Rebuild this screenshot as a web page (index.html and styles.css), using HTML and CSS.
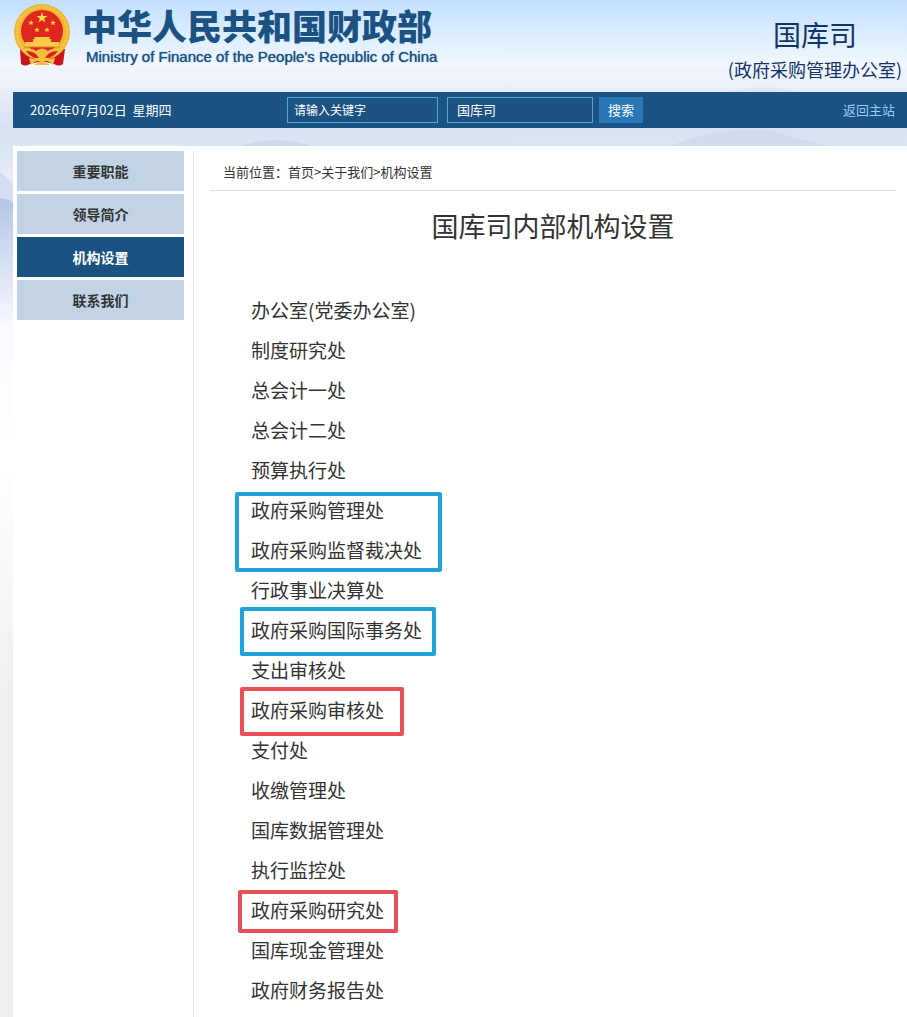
FILE: index.html
```html
<!DOCTYPE html>
<html lang="zh-CN">
<head>
    <meta charset="UTF-8">
    <meta name="viewport" content="width=device-width, initial-scale=1.0">
    <title>国库司内部机构设置</title>
    <link rel="stylesheet" href="styles.css">
</head>
<body>
    <svg class="hills" viewBox="0 0 907 330" preserveAspectRatio="none" aria-hidden="true">
        <defs>
            <linearGradient id="hillFade" x1="0" y1="0" x2="0" y2="1">
                <stop offset="0" stop-color="#b3c5e6"/>
                <stop offset="1" stop-color="#fafbff"/>
            </linearGradient>
        </defs>
        <path d="M0 198Q8 198 14 202V330H0Z" fill="url(#hillFade)"/>
        <path d="M0 172Q6 176 14 186V204Q8 198 0 198Z" fill="#d3def2"/>
        <path d="M725 92Q755 86 770 88Q785 88 800 92Z" fill="#dfe6f3"/>
        <path d="M240 146Q268 138 288 141Q302 143 312 146Z" fill="#cdd8ec"/>
        <path d="M670 146Q705 132 735 130H770Q800 140 830 146Z" fill="#d0dcee"/>
    </svg>
    <div class="page">
        <header class="header">
            <div class="brand">
                <svg class="emblem" viewBox="0 0 58 62" aria-hidden="true">
                    <path d="M7 45L8 60Q12 63 17 60L29 57L41 60Q46 63 50 60L52 45Z" fill="#c9161c"/>
                    <circle cx="29" cy="28" r="28" fill="#efb534"/>
                    <circle cx="29" cy="28" r="25" fill="none" stroke="#f5c545" stroke-width="3" stroke-dasharray="3 1"/>
                    <circle cx="29" cy="27" r="21" fill="#df261f"/>
                    <path d="M29 8L30.300 12H34.500L31.100 14.500L32.400 18.500L29 16L25.600 18.500L26.900 14.500L23.500 12H27.700Z" fill="#ffdc4a"/>
                    <g fill="#ffd447">
                        <path d="M18 16l.8 2h2l-1.600 1.300.6 2-1.800-1.200-1.800 1.200.6-2-1.600-1.300h2z"/>
                        <path d="M40 16l.8 2h2l-1.600 1.300.6 2-1.800-1.200-1.800 1.200.6-2-1.600-1.300h2z"/>
                        <path d="M24 23l.8 2h2l-1.600 1.300.6 2-1.800-1.200-1.800 1.200.6-2-1.600-1.300h2z"/>
                        <path d="M34 23l.8 2h2l-1.600 1.300.6 2-1.800-1.200-1.800 1.200.6-2-1.600-1.300h2z"/>
                    </g>
                    <path d="M21 33H37L36 35H38V38H46V43H12V38H20V35H22Z" fill="#f8c94a"/>
                    <path d="M11 43H47" stroke="#dc8b25"/>
                    <path d="M9 45Q20 44 23 47Q29 42 35 47Q38 44 49 45L42 53Q35 55 32 52H26Q23 55 16 53Z" fill="#f4c23e"/>
                    <path d="M13 47Q20 47 24 51H34Q38 47 45 47Q39 55 33 54L29 51L25 54Q19 55 13 47Z" fill="#d8221d"/>
                    <path d="M22 48Q29 43 36 48L33 53H25Z" fill="#f2bd38"/>
                    <path d="M16 54Q24 56 27 53H31Q34 56 42 54L40 61Q35 55 29 58Q23 55 18 61Z" fill="#f4c23e"/>
                    <path d="M21 61Q29 54 37 61Z" fill="#f3b735"/>
                </svg>
                <div class="brand-text">
                    <div class="brand-name">中华人民共和国财政部</div>
                    <div class="brand-en">Ministry of Finance of the People's Republic of China</div>
                </div>
            </div>
            <div class="department">
                <div class="department-name">国库司</div>
                <div class="department-note">(政府采购管理办公室)</div>
            </div>
        </header>

        <div class="toolbar">
            <div class="date">2026年07月02日&nbsp; 星期四</div>
            <form class="search">
                <input type="text" class="keyword" placeholder="请输入关键字" aria-label="请输入关键字">
                <select class="scope" aria-label="搜索范围">
                    <option>国库司</option>
                </select>
                <button type="button" class="search-btn">搜索</button>
            </form>
            <a href="#" class="back">返回主站</a>
        </div>

        <div class="main">
            <nav class="side">
                <a href="#">重要职能</a>
                <a href="#">领导简介</a>
                <a href="#" class="active">机构设置</a>
                <a href="#">联系我们</a>
            </nav>
            <div class="content">
                <div class="crumbs">当前位置：<a href="#">首页</a>&gt;<a href="#">关于我们</a>&gt;<a href="#">机构设置</a></div>
                <h1>国库司内部机构设置</h1>
                <ul class="offices">
                    <li>办公室(党委办公室)</li>
                    <li>制度研究处</li>
                    <li>总会计一处</li>
                    <li>总会计二处</li>
                    <li>预算执行处</li>
                    <li>政府采购管理处</li>
                    <li class="mark blue pair">政府采购监督裁决处</li>
                    <li>行政事业决算处</li>
                    <li class="mark blue">政府采购国际事务处</li>
                    <li>支出审核处</li>
                    <li class="mark red wide">政府采购审核处</li>
                    <li>支付处</li>
                    <li>收缴管理处</li>
                    <li>国库数据管理处</li>
                    <li>执行监控处</li>
                    <li class="mark red tight">政府采购研究处</li>
                    <li>国库现金管理处</li>
                    <li>政府财务报告处</li>
                </ul>
            </div>
        </div>
    </div>
</body>
</html>
```
FILE: styles.css
```css
* {
    box-sizing: border-box;
}
body {
    margin: 0;
    font-family: "Noto Sans CJK SC", sans-serif;
    font-size: 13px;
    color: #333;
    background: linear-gradient(#c3dffe 0, #dceeff 35px, #f2f7fe 65px, #e9eef8 90px, #d7e1f2 128px, #dce6f5 150px, #e4ebf8 170px, #f8faff 320px, #fff 460px, #efefef 700px);
}
a {
    color: inherit;
    text-decoration: none;
}
.hills {
    position: absolute;
    top: 0;
    left: 0;
    width: 100%;
    height: 330px;
}
.page {
    position: relative;
    margin-left: 13px;
}

/* header */
.header {
    display: flex;
    justify-content: space-between;
    height: 92px;
}
.brand {
    display: flex;
    gap: 11px;
    padding-top: 4px;
}
.emblem {
    width: 58px;
    height: 62px;
}
.brand-text {
    color: #1b5282;
}
.brand-name {
    font-size: 35px;
    font-weight: 900;
    line-height: 42px;
}
.brand-en {
    padding-left: 4px;
    font-family: "Liberation Sans", Arial, sans-serif;
    font-size: 15px;
    line-height: 22px;
    text-shadow: 0 0 1px #1b5282;
}
.department {
    padding: 14px 5px 0 0;
    color: #123468;
    text-align: center;
}
.department-name {
    font-size: 28px;
    line-height: 40px;
}
.department-note {
    font-size: 18px;
    line-height: 30px;
}

/* toolbar */
.toolbar {
    display: grid;
    grid-template-columns: 257px 1fr auto;
    align-items: center;
    height: 36px;
    padding: 0 12px 0 17px;
    background-color: #1a5281;
    color: #fff;
}
.date, .back {
    padding-bottom: 2px;
}
.search {
    display: flex;
    align-items: center;
}
.keyword, .scope, .search-btn {
    height: 26px;
    margin: 0;
    border: 1px solid #5aa0d8;
    border-radius: 0;
    background-color: transparent;
    color: #fff;
    font-family: inherit;
    font-size: 13px;
}
.keyword {
    width: 151px;
    padding: 0 6px 2px;
    font-size: 12px;
}
.keyword::placeholder {
    color: #fff;
    opacity: 1;
}
.scope {
    width: 146px;
    margin-left: 9px;
    padding: 0 9px 2px;
    appearance: none;
}
.search-btn {
    width: 44px;
    margin-left: 6px;
    padding: 0 0 2px;
    border: none;
    background-color: #2878b8;
}
.back {
    color: #9acbf5;
}

/* main */
.main {
    display: flex;
    margin-top: 18px;
    padding: 5px 11px 0 4px;
    background-color: #fff;
}
.side {
    display: flex;
    flex-direction: column;
    gap: 3px;
    width: 167px;
}
.side a {
    height: 40px;
    background-color: #c1d3e5;
    font-size: 14px;
    font-weight: 700;
    line-height: 40px;
    text-align: center;
}
.side .active {
    background-color: #1a5281;
    color: #fff;
}
.content {
    flex: 1;
    margin-left: 9px;
    padding-left: 16px;
    border-left: 1px solid #e5e5e5;
}
.crumbs {
    height: 40px;
    padding-left: 13px;
    border-bottom: 1px solid #ddd;
    line-height: 42px;
}
h1 {
    margin: 15px 0 44px;
    font-size: 27px;
    font-weight: 400;
    line-height: 40px;
    text-align: center;
}
.offices {
    margin: 0;
    padding: 0 0 8px 41px;
    list-style: none;
    font-size: 19px;
    line-height: 40px;
}
.offices li {
    position: relative;
    width: fit-content;
}
.mark::before {
    content: "";
    position: absolute;
    inset: -3px -14px -6px -11px;
    border: 4px solid;
    border-radius: 2px;
}
.blue::before {
    border-color: #22a2dd;
}
.red::before {
    border-color: #e84f57;
}
.pair::before {
    inset: -38px -20px -2px -16px;
}
.wide::before {
    right: -20px;
}
.tight::before {
    inset: 0 -14px -3px -13px;
}
```
